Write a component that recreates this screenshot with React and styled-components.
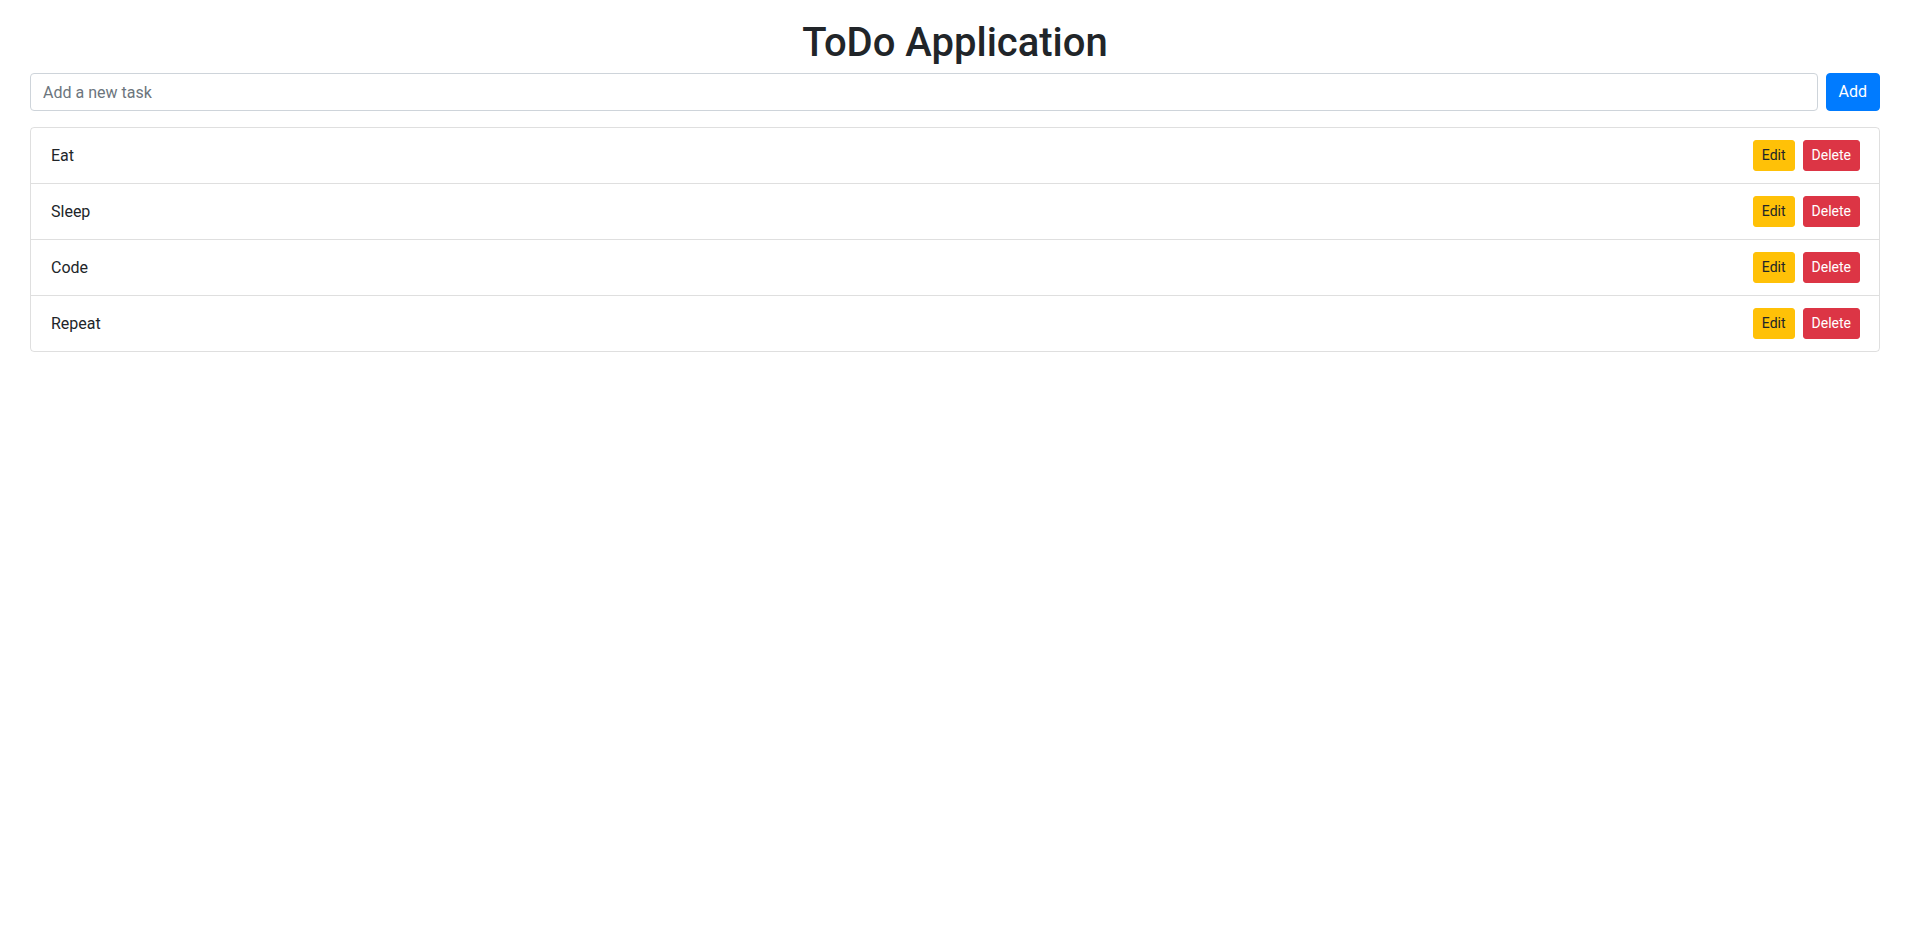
import { useState } from "react";
import styled, { createGlobalStyle } from "styled-components";

const GlobalStyle = createGlobalStyle`
  body {
    margin: 0;
    background: #ffffff;
    color: #212529;
    font-family: Roboto, "Liberation Sans", sans-serif;
    font-size: 16px;
    line-height: 1.5;
  }
  * {
    box-sizing: border-box;
  }
`;

const initialTodos = ["Eat", "Sleep", "Code", "Repeat"];

export default function App() {
  const [todos, setTodos] = useState(initialTodos);
  const [task, setTask] = useState("");

  const onAddHandler = (e) => {
    e.preventDefault();
    if (!task.trim()) return;
    setTodos([...todos, task.trim()]);
    setTask("");
  };

  const onDeleteHandler = (index) => {
    setTodos(todos.filter((_, i) => i !== index));
  };

  return (
    <>
      <GlobalStyle />
      <Page>
        <Title>ToDo Application</Title>
        <AddForm onSubmit={onAddHandler}>
          <TaskInput
            type="text"
            placeholder="Add a new task"
            value={task}
            onChange={(e) => setTask(e.target.value)}
          />
          <Button type="submit" $variant="primary">
            Add
          </Button>
        </AddForm>
        <TodoList>
          {todos.map((todo, index) => (
            <TodoItem key={index}>
              <span>{todo}</span>
              <Actions>
                <Button type="button" $variant="warning" $small>
                  Edit
                </Button>
                <Button
                  type="button"
                  $variant="danger"
                  $small
                  onClick={() => onDeleteHandler(index)}
                >
                  Delete
                </Button>
              </Actions>
            </TodoItem>
          ))}
        </TodoList>
      </Page>
    </>
  );
}

const variants = {
  primary: { bg: "#007bff", color: "#ffffff" },
  warning: { bg: "#ffc107", color: "#212529" },
  danger: { bg: "#dc3545", color: "#ffffff" },
};

const Page = styled.div`
  padding: 19px 35px 0 30px;
`;

const Title = styled.h1`
  margin: 0 0 6px;
  text-align: center;
  font-size: 40px;
  font-weight: 500;
  line-height: 48px;
  color: #212529;
`;

const AddForm = styled.form`
  display: flex;
  gap: 8px;
  margin-bottom: 16px;
`;

const TaskInput = styled.input`
  flex: 1;
  height: 38px;
  padding: 6px 12px;
  font-family: inherit;
  font-size: 16px;
  color: #495057;
  border: 1px solid #ced4da;
  border-radius: 4px;
  outline: none;

  &::placeholder {
    color: #6c757d;
  }
`;

const Button = styled.button`
  font-family: inherit;
  font-size: ${(props) => (props.$small ? "14px" : "16px")};
  line-height: 1.5;
  padding: ${(props) => (props.$small ? "4px 8px" : "6px 12px")};
  border: 1px solid ${(props) => variants[props.$variant].bg};
  border-radius: ${(props) => (props.$small ? "3px" : "4px")};
  background-color: ${(props) => variants[props.$variant].bg};
  color: ${(props) => variants[props.$variant].color};
  cursor: pointer;
`;

const TodoList = styled.ul`
  list-style: none;
  margin: 0;
  padding: 0;
  border: 1px solid rgba(0, 0, 0, 0.125);
  border-radius: 4px;
`;

const TodoItem = styled.li`
  display: flex;
  justify-content: space-between;
  align-items: center;
  height: 55px;
  padding: 0 19px 0 20px;
  color: #212529;

  & + & {
    border-top: 1px solid rgba(0, 0, 0, 0.125);
    height: 56px;
  }
`;

const Actions = styled.div`
  display: flex;
  gap: 8px;
`;
